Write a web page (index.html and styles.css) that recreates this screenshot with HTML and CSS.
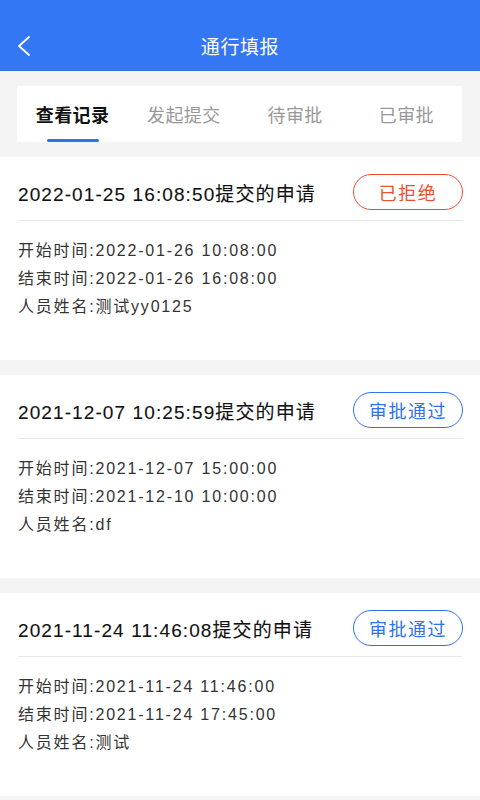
FILE: index.html
```html
<!DOCTYPE html>
<html lang="zh-CN">
<head>
<meta charset="utf-8">
<title>通行填报</title>
<link rel="stylesheet" href="styles.css">
</head>
<body>
<header class="nav">
  <svg class="back" width="16" height="22" viewBox="0 0 16 22"><polyline points="13,2 3,11 13,20" fill="none" stroke="#fff" stroke-width="1.8" stroke-linecap="round" stroke-linejoin="round"/></svg>
  <h1 class="nav-title">通行填报</h1>
</header>
<div class="tabs-wrap">
  <nav class="tabs">
    <div class="tab active">查看记录</div>
    <div class="tab">发起提交</div>
    <div class="tab">待审批</div>
    <div class="tab">已审批</div>
  </nav>
</div>
<main class="list">
  <section class="card">
    <div class="card-head">
      <div class="card-title">2022-01-25 16:08:50提交的申请</div>
      <div class="badge reject">已拒绝</div>
    </div>
    <div class="card-body">
      <p>开始时间:2022-01-26 10:08:00</p>
      <p>结束时间:2022-01-26 16:08:00</p>
      <p>人员姓名:测试yy0125</p>
    </div>
  </section>
  <section class="card">
    <div class="card-head">
      <div class="card-title">2021-12-07 10:25:59提交的申请</div>
      <div class="badge pass">审批通过</div>
    </div>
    <div class="card-body">
      <p>开始时间:2021-12-07 15:00:00</p>
      <p>结束时间:2021-12-10 10:00:00</p>
      <p>人员姓名:df</p>
    </div>
  </section>
  <section class="card">
    <div class="card-head">
      <div class="card-title">2021-11-24 11:46:08提交的申请</div>
      <div class="badge pass">审批通过</div>
    </div>
    <div class="card-body">
      <p>开始时间:2021-11-24 11:46:00</p>
      <p>结束时间:2021-11-24 17:45:00</p>
      <p>人员姓名:测试</p>
    </div>
  </section>
</main>
</body>
</html>
```
FILE: styles.css
```css
* { box-sizing: border-box; }
html, body { margin: 0; padding: 0; }
body {
  width: 480px;
  min-height: 800px;
  background: #f4f4f4;
  font-family: "Liberation Sans", "Noto Sans CJK SC", sans-serif;
  color: #222;
}
.nav {
  height: 71px;
  background: #3377f4;
  border-bottom: 1px solid #2f6fe6;
  padding-top: 20px;
  display: flex;
  align-items: center;
  justify-content: center;
  position: relative;
}
.back {
  position: absolute;
  left: 16px;
  top: 35px;
}
.nav-title {
  margin: 0;
  font-size: 19px;
  font-weight: normal;
  color: #fff;
  letter-spacing: 0.6px;
  font-family: "Noto Sans CJK SC", sans-serif;
}
.tabs-wrap {
  padding: 15px 18px 15px 17px;
}
.tabs {
  height: 56px;
  background: #fff;
  display: flex;
}
.tab {
  flex: 1;
  display: flex;
  align-items: center;
  justify-content: center;
  font-size: 18px;
  color: #999;
  letter-spacing: 0.4px;
  font-family: "Noto Sans CJK SC", sans-serif;
  position: relative;
  padding-bottom: 1px;
}
.tab.active {
  color: #111;
  font-weight: bold;
}
.tab.active::after {
  content: "";
  position: absolute;
  left: 50%;
  bottom: 0;
  width: 52px;
  height: 3px;
  margin-left: -26px;
  border-radius: 2px;
  background: #2f72e6;
}
.list {
  display: flex;
  flex-direction: column;
  gap: 15px;
}
.card {
  background: #fff;
  padding: 0 17px 39px 18px;
}
.card-head {
  display: flex;
  align-items: center;
  justify-content: space-between;
  padding: 17px 0 10px;
  border-bottom: 1px solid #e8e8e8;
}
.card-title {
  font-size: 19px;
  letter-spacing: 1.1px;
  color: #111;
  -webkit-text-stroke: 0.1px #111;
}
.badge {
  width: 110px;
  height: 36px;
  border-radius: 18px;
  border: 1px solid;
  display: flex;
  align-items: center;
  justify-content: center;
  font-size: 18px;
  letter-spacing: 1.5px;
  font-family: "Noto Sans CJK SC", sans-serif;
}
.badge.reject { color: #e9512f; border-color: #e9512f; }
.badge.pass { color: #2e73e8; border-color: #2e73e8; }
.card-body {
  padding-top: 16px;
}
.card-body p {
  margin: 0;
  font-size: 16px;
  line-height: 28px;
  letter-spacing: 1.8px;
  color: #333;
}
```
